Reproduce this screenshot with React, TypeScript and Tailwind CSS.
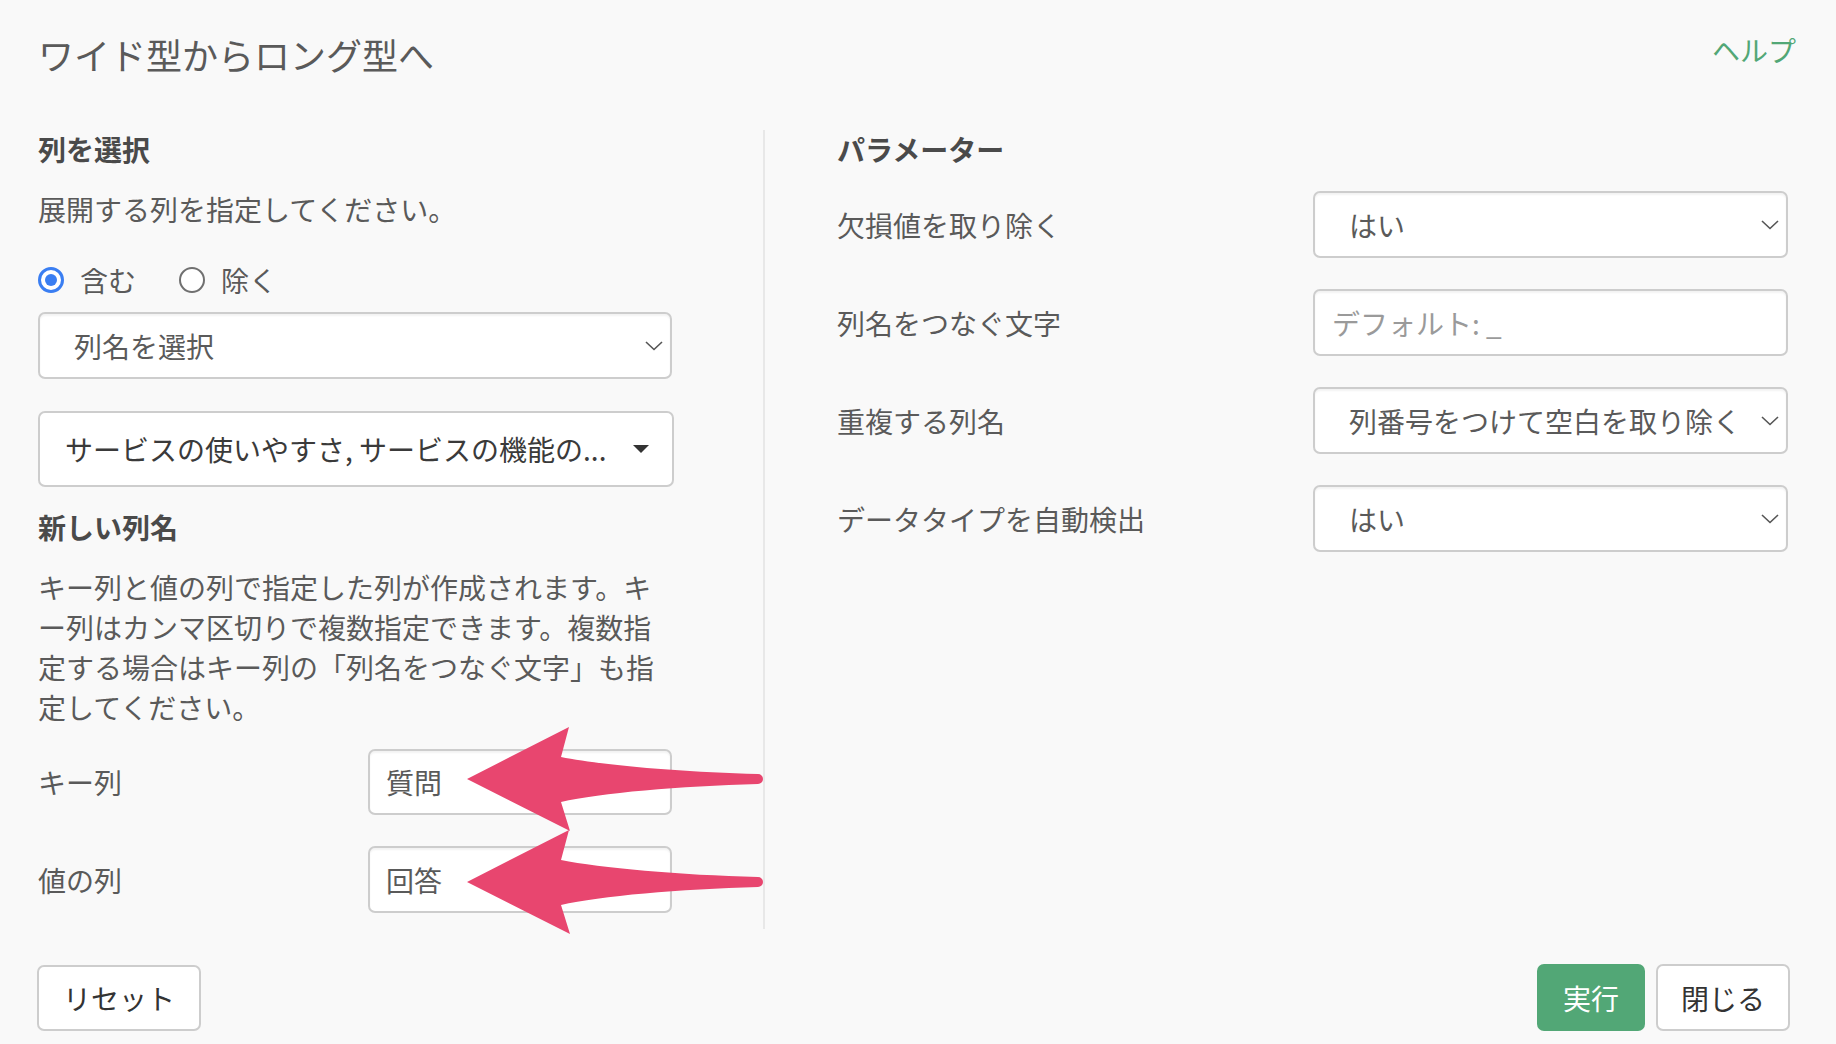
import React from "react";

const Chevron = () => (
  <svg width="18" height="10" viewBox="0 0 18 10" className="shrink-0">
    <path d="M1 1 L9 8.5 L17 1" fill="none" stroke="#555" strokeWidth="1.6" />
  </svg>
);

const SelectBox = ({ text, w, className = "" }: { text: string; w: string; className?: string }) => (
  <div
    className={`flex h-[67px] items-center justify-between rounded-[7px] border-2 border-[#cdcdcd] bg-white pl-[34px] pr-[7px] text-[#5a5a5a] shadow-[inset_0_2px_2px_rgba(0,0,0,0.05)] ${w} ${className}`}
  >
    <span className="whitespace-nowrap">{text}</span>
    <Chevron />
  </div>
);

const Arrow = () => (
  <path d="M0 52 L102 0 L94 30 C133 38 213 45 291 47 A5 5 0 0 1 291 57 C213 59 133 66 94 75 L103 104 Z" fill="#e8466f" />
);

export default function App() {
  return (
    <div className="min-h-[1044px] w-full bg-[#f9f9f9] font-['Noto_Sans_CJK_JP','Noto_Sans',sans-serif] text-[28px] leading-[40px] text-[#5a5a5a]">
      <div className="flex items-start justify-between pl-[38px] pr-[40px] pt-[30px]">
        <h1 className="text-[36px] leading-[48px] font-normal text-[#5a5a5a]">ワイド型からロング型へ</h1>
        <a className="text-[28px] leading-[40px] text-[#52a776]">ヘルプ</a>
      </div>

      <div className="mt-[52px] flex pl-[38px] pr-[48px]">
        <div className="relative w-[727px] border-r-2 border-[#e8e8e8] pb-[16px] pr-[89px]">
          <h3 className="-mt-[1px] font-bold text-[#4a4a4a]">列を選択</h3>
          <p className="mt-[20px]">展開する列を指定してください。</p>
          <div className="mt-[31px] flex h-[40px] items-center">
            <span className="flex h-[26px] w-[26px] items-center justify-center rounded-full border-[3px] border-[#3a7ef2] bg-white">
              <span className="h-[12px] w-[12px] rounded-full bg-[#3a7ef2]" />
            </span>
            <span className="ml-[16px]">含む</span>
            <span className="ml-[43px] h-[26px] w-[26px] rounded-full border-2 border-[#707070] bg-white" />
            <span className="ml-[16px]">除く</span>
          </div>
          <SelectBox text="列名を選択" w="w-[634px]" className="mt-[12px]" />
          <div className="mt-[32px] flex h-[76px] w-[636px] items-center justify-between rounded-[7px] border-2 border-[#cdcdcd] bg-white pl-[25px] pr-[23px] text-[#3a3a3a]">
            <span className="whitespace-nowrap">サービスの使いやすさ, サービスの機能の...</span>
            <svg width="16" height="8" viewBox="0 0 16 8" className="shrink-0">
              <path d="M0 0 L16 0 L8 8 Z" fill="#333" />
            </svg>
          </div>
          <h3 className="mt-[20px] font-bold text-[#4a4a4a]">新しい列名</h3>
          <p className="mt-[20px] w-[636px]">
            キー列と値の列で指定した列が作成されます。キ
            <br />
            ー列はカンマ区切りで複数指定できます。複数指
            <br />
            定する場合はキー列の「列名をつなぐ文字」も指
            <br />
            定してください。
          </p>
          <div className="mt-[22px] flex h-[66px] items-center">
            <span className="w-[330px]">キー列</span>
            <div className="flex h-[66px] w-[304px] items-center rounded-[7px] border-2 border-[#cdcdcd] bg-white pl-[16px] shadow-[inset_0_2px_2px_rgba(0,0,0,0.05)]">
              質問
            </div>
          </div>
          <div className="mt-[31px] flex h-[67px] items-center">
            <span className="w-[330px]">値の列</span>
            <div className="flex h-[67px] w-[304px] items-center rounded-[7px] border-2 border-[#cdcdcd] bg-white pl-[16px] shadow-[inset_0_2px_2px_rgba(0,0,0,0.05)]">
              回答
            </div>
          </div>
          <svg
            className="pointer-events-none absolute left-[429px] top-[597px]"
            width="300"
            height="210"
            viewBox="0 0 300 210"
          >
            <Arrow />
            <g transform="translate(0 103)">
              <Arrow />
            </g>
          </svg>
        </div>

        <div className="flex-1 pl-[72px]">
          <h3 className="-mt-[1px] font-bold text-[#4a4a4a]">パラメーター</h3>
          <div className="mt-[22px] flex flex-col gap-[31px]">
            <div className="flex h-[67px] items-center">
              <span className="w-[476px]">欠損値を取り除く</span>
              <SelectBox text="はい" w="w-[475px]" />
            </div>
            <div className="flex h-[67px] items-center">
              <span className="w-[476px]">列名をつなぐ文字</span>
              <div className="flex h-[67px] w-[475px] items-center rounded-[7px] border-2 border-[#cdcdcd] bg-white pl-[17px] text-[#9a9a9a] shadow-[inset_0_2px_2px_rgba(0,0,0,0.05)]">
                デフォルト: _
              </div>
            </div>
            <div className="flex h-[67px] items-center">
              <span className="w-[476px]">重複する列名</span>
              <SelectBox text="列番号をつけて空白を取り除く" w="w-[475px]" />
            </div>
            <div className="flex h-[67px] items-center">
              <span className="w-[476px]">データタイプを自動検出</span>
              <SelectBox text="はい" w="w-[475px]" />
            </div>
          </div>
        </div>
      </div>

      <div className="mt-[35px] flex items-center pl-[37px] pr-[46px]">
        <button className="flex h-[66px] w-[164px] items-center justify-center rounded-[7px] border-2 border-[#cdcdcd] bg-white text-[#333]">
          リセット
        </button>
        <div className="ml-auto flex gap-[11px]">
          <button className="flex h-[67px] w-[108px] items-center justify-center rounded-[7px] bg-[#52a776] text-white">
            実行
          </button>
          <button className="flex h-[67px] w-[134px] items-center justify-center rounded-[7px] border-2 border-[#cdcdcd] bg-white text-[#333]">
            閉じる
          </button>
        </div>
      </div>
    </div>
  );
}
